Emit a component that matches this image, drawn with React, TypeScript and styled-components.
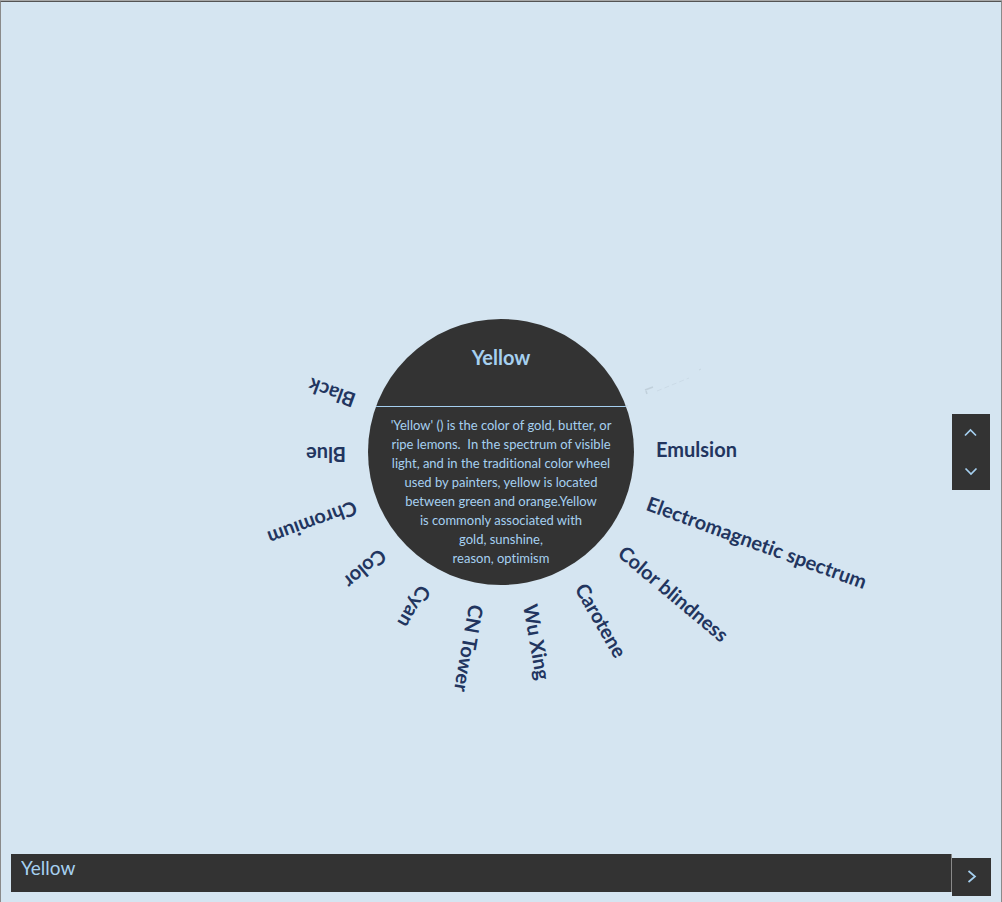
import React, { useState } from "react";
import styled, { createGlobalStyle } from "styled-components";

const colors = {
  sky: "#d5e5f1",
  ink: "#333333",
  navy: "#22355f",
  pale: "#a6d0f0",
  frame: "#8a8a8a",
};

const GlobalStyle = createGlobalStyle`
  * { box-sizing: border-box; }
  body {
    margin: 0;
    background: ${colors.sky};
    font-family: Lato, "Liberation Sans", sans-serif;
    font-variant-ligatures: none;
  }
`;

const Page = styled.main`
  display: grid;
  grid-template: minmax(100%, auto) / 100%;
  min-height: 100vh;
  overflow: hidden;
  background: ${colors.sky};
  border: 1px solid ${colors.frame};
  border-top: 2px ridge #a8a8a8;
  border-bottom: 0;
`;

const Stage = styled.section`
  grid-area: 1 / 1;
  display: grid;
  place-items: center;
`;

const Wheel = styled.div`
  position: relative;
  width: 266px;
  height: 266px;
`;

const Disc = styled.article`
  display: flex;
  flex-direction: column;
  align-items: center;
  width: 100%;
  height: 100%;
  overflow: hidden;
  border-radius: 50%;
  background: ${colors.ink};
  color: ${colors.pale};
  text-align: center;
`;

const Title = styled.h1`
  width: 100%;
  height: 88px;
  margin: 0;
  padding-top: 26px;
  border-bottom: 1px solid ${colors.pale};
  font-size: 20px;
  font-weight: 700;
  line-height: 24px;
`;

const Summary = styled.p`
  margin: 0;
  padding-top: 9px;
  font-size: 13px;
  line-height: 19px;
  white-space: pre;
`;

const Spokes = styled.nav`
  position: absolute;
  top: 50%;
  left: 50%;
`;

const Spoke = styled.a<{ $angle: number }>`
  position: absolute;
  top: -15px;
  left: 0;
  padding-left: 155px;
  color: ${colors.navy};
  font-size: 20px;
  font-weight: 700;
  line-height: 24px;
  text-decoration: none;
  white-space: nowrap;
  transform: rotate(${(p) => p.$angle}deg);
  transform-origin: 0 15px;
  pointer-events: none;
`;

const FadingMark = styled.svg`
  position: absolute;
  top: 48px;
  left: 256px;
  width: 80px;
  height: 44px;
`;

const Pager = styled.div`
  grid-area: 1 / 1;
  place-self: center end;
  display: flex;
  flex-direction: column;
  margin-right: 11px;
`;

const IconButton = styled.button<{ $width: number }>`
  display: flex;
  align-items: center;
  justify-content: center;
  flex: none;
  width: ${(p) => p.$width}px;
  height: 38px;
  padding: 0;
  border: 0;
  background: ${colors.ink};
  color: ${colors.pale};
  cursor: pointer;
`;

const SearchBar = styled.form`
  grid-area: 1 / 1;
  align-self: end;
  display: flex;
  align-items: flex-end;
  margin: 0 10px 6px;
`;

const SearchInput = styled.input`
  flex: 1;
  min-width: 0;
  height: 38px;
  margin-bottom: 4px;
  padding: 0 10px 12px;
  border: 0;
  border-right: 1px solid ${colors.frame};
  outline: 0;
  background: ${colors.ink};
  color: ${colors.pale};
  font: 400 19px/24px Lato, sans-serif;
`;

const Icon = styled.svg`
  width: 14px;
  height: 14px;
  fill: none;
  stroke: currentColor;
  stroke-width: 1.7;
`;

const topics = [
  "Emulsion",
  "Electromagnetic spectrum",
  "Color blindness",
  "Carotene",
  "Wu Xing",
  "CN Tower",
  "Cyan",
  "Color",
  "Chromium",
  "Blue",
  "Black",
];

const summary = [
  "'Yellow' () is the color of gold, butter, or",
  "ripe lemons.  In the spectrum of visible",
  "light, and in the traditional color wheel",
  "used by painters, yellow is located",
  "between green and orange.Yellow",
  "is commonly associated with",
  "gold, sunshine,",
  "reason, optimism",
].join("\n");

export default function App() {
  const [query, setQuery] = useState("Yellow");

  return (
    <>
      <GlobalStyle />
      <Page>
        <Stage>
          <Wheel>
            <Disc>
              <Title>Yellow</Title>
              <Summary>{summary}</Summary>
            </Disc>
            <Spokes aria-label="Related topics">
              {topics.map((topic, i) => (
                <Spoke key={topic} href="#" $angle={i * 20}>
                  {topic}
                </Spoke>
              ))}
            </Spokes>
            <FadingMark viewBox="0 0 80 44" fill="none" stroke="#bccbd6" aria-hidden="true">
              <path d="M21 23l8-3M22 24l1 3" strokeWidth="1.5" opacity=".8" />
              <path d="M33 24l32-13" strokeDasharray="5 3" opacity=".4" />
              <path d="M75 3l2-1M1 39h3" opacity=".6" />
            </FadingMark>
          </Wheel>
        </Stage>
        <Pager>
          <IconButton type="button" $width={38} aria-label="Previous topics">
            <Icon viewBox="0 0 14 14"><path d="M1 9.500L6.500 4L12 9.500" /></Icon>
          </IconButton>
          <IconButton type="button" $width={38} aria-label="Next topics">
            <Icon viewBox="0 0 14 14"><path d="M1.500 4.500L7 10L12.500 4.500" /></Icon>
          </IconButton>
        </Pager>
        <SearchBar onSubmit={(e) => e.preventDefault()}>
          <SearchInput
            aria-label="Topic"
            value={query}
            onChange={(e) => setQuery(e.target.value)}
          />
          <IconButton type="submit" $width={39} aria-label="Go">
            <Icon viewBox="0 0 14 14"><path d="M3.500 1L10 6.500L3.500 12" /></Icon>
          </IconButton>
        </SearchBar>
      </Page>
    </>
  );
}
